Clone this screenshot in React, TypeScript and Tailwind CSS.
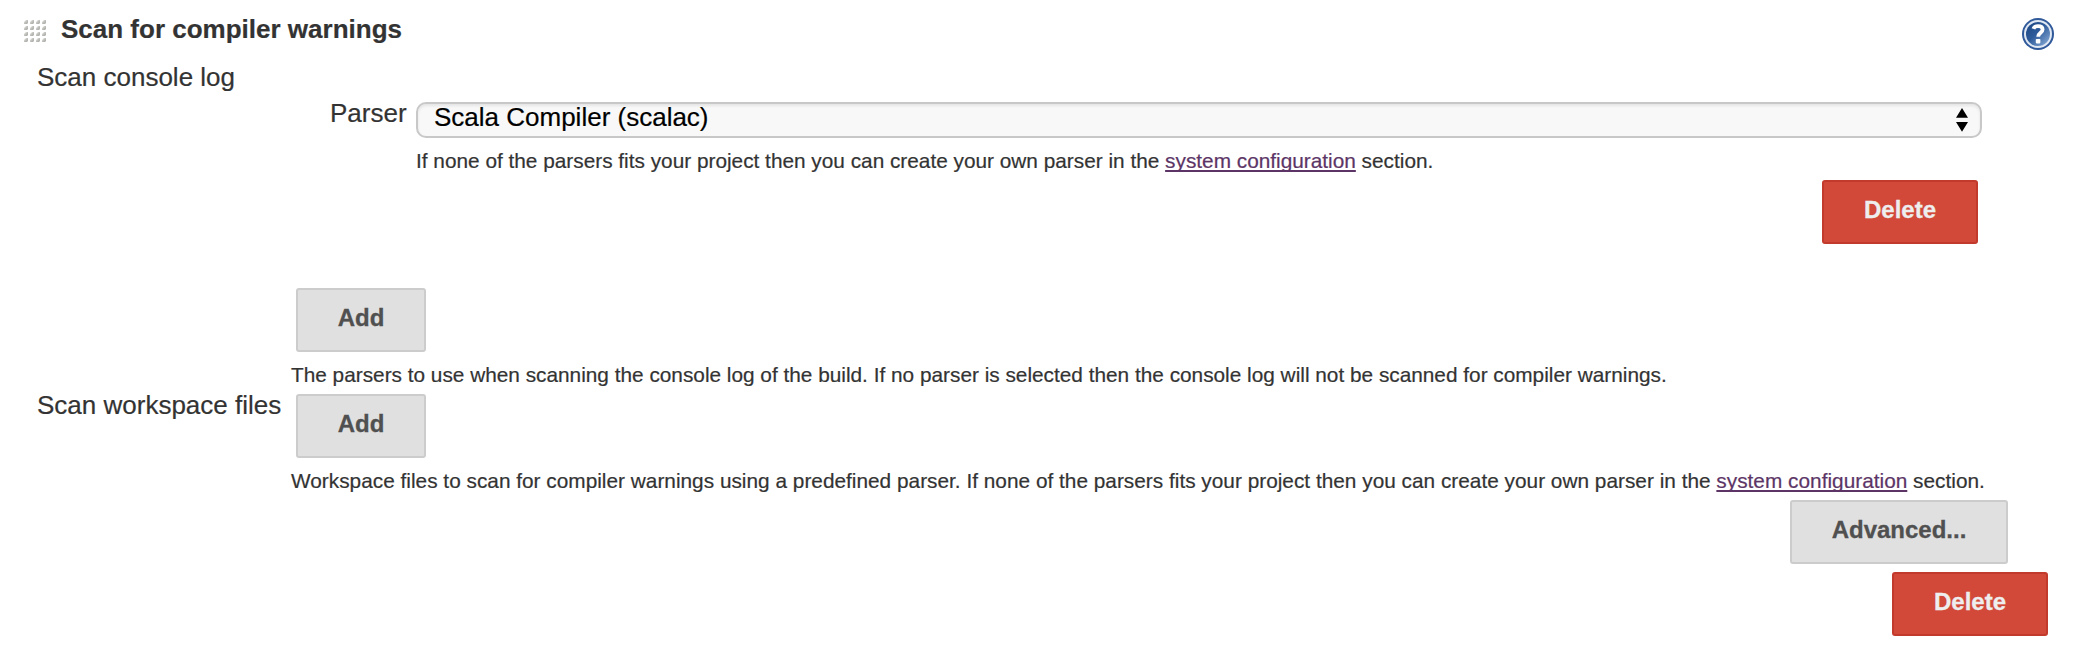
import type { ReactNode } from "react";

function Button({ children, width, danger = false }: { children: ReactNode; width: string; danger?: boolean }) {
  const tone = danger
    ? "bg-[#d24939] border-[#c23a2c] text-[#eeeeee]"
    : "bg-[#e0e0e0] border-[#cccccc] text-[#505050]";
  return (
    <button
      type="button"
      className={`flex h-16 shrink-0 items-start justify-center rounded-[3px] border-2 pt-[14px] text-2xl leading-[28px] font-bold whitespace-nowrap [-webkit-text-stroke:0.3px] ${width} ${tone}`}
    >
      {children}
    </button>
  );
}

function Description({ children, spacing = "" }: { children: ReactNode; spacing?: string }) {
  return <p className={`h-6 text-[20.8px] leading-6 whitespace-nowrap ${spacing}`}>{children}</p>;
}

function ConfigLink() {
  return (
    <a href="#" className="text-[#5c3566] underline decoration-2 underline-offset-[2px] [text-decoration-skip-ink:none]">
      system configuration
    </a>
  );
}

const gripSteps = [0, 6, 12, 18];

function DragGrip() {
  return (
    <svg width="22" height="23" viewBox="0 0 22 23" aria-hidden="true">
      <defs>
        <linearGradient id="grip" x1="0" y1="0" x2="1" y2="1">
          <stop offset="0.2" stopColor="#dcdcd8" />
          <stop offset="0.6" stopColor="#b8b8b4" />
          <stop offset="1" stopColor="#aaaaa6" />
        </linearGradient>
      </defs>
      {gripSteps.map((y) =>
        gripSteps.map((x) => (
          <path key={`${x}-${y}`} d={`M${x + 2} ${y}h2v3l-1 1h-3v-2z`} fill="url(#grip)" />
        )),
      )}
    </svg>
  );
}

function HelpIcon() {
  return (
    <svg width="32" height="32" viewBox="0 0 32 32" role="img" aria-label="Help">
      <defs>
        <linearGradient id="help" x1="0.1" y1="0.1" x2="0.9" y2="0.9">
          <stop offset="0" stopColor="#204a87" />
          <stop offset="0.45" stopColor="#2f5c9b" />
          <stop offset="1" stopColor="#7fa3d0" />
        </linearGradient>
      </defs>
      <circle cx="16" cy="16" r="16" fill="#30599a" />
      <circle cx="16" cy="16" r="14" fill="#dfe8f3" />
      <circle cx="16" cy="16" r="12" fill="url(#help)" />
      <path
        d="M11.4 10.800c.6-1.700 2.200-2.600 4.600-2.600 2.900 0 4.600 1.200 4.600 3.300 0 3.300-4.400 3.400-4.400 7.300"
        fill="none"
        stroke="#fff"
        strokeWidth="3.800"
      />
      <rect x="13.800" y="21" width="4.600" height="4.400" rx="0.800" fill="#fff" />
    </svg>
  );
}

export default function App() {
  return (
    <main
      className="flex h-[652px] w-[2078px] flex-col overflow-hidden bg-white text-[26px] leading-[30px] text-[#333333] [-webkit-text-stroke:0.2px]"
      style={{ fontFamily: '"Liberation Sans", Arial, sans-serif' }}
    >
      <header className="flex h-[62px] items-start pr-6 pl-6">
        <div className="mt-5">
          <DragGrip />
        </div>
        <h2 className="mt-[14px] ml-[15px] grow font-bold">Scan for compiler warnings</h2>
        <div className="mt-[18px]">
          <HelpIcon />
        </div>
      </header>

      <section>
        <h3 className="h-9 pl-[37px]">Scan console log</h3>
        <div className="flex pr-24 pl-[330px]">
          <label className="w-[86px] shrink-0">Parser</label>
          <div className="mt-1 flex h-9 grow items-start rounded-[10px] border-2 border-[#c8c8c8] bg-[#f8f8f8] pr-3 pl-4 text-black shadow-[inset_0_2px_3px_rgba(0,0,0,0.08)]">
            <span className="grow leading-[26px]">Scala Compiler (scalac)</span>
            <svg className="mt-[4px]" width="12" height="24" viewBox="0 0 12 24" aria-hidden="true">
              <path d="M6 0l6 9.800H0zM6 23.800l6-9.800H0z" fill="#000" />
            </svg>
          </div>
        </div>
        <div className="mt-[11px] pl-[416px]">
          <Description>
            If none of the parsers fits your project then you can create your own parser in the <ConfigLink /> section.
          </Description>
        </div>
        <div className="mt-[7px] flex justify-end pr-[100px]">
          <Button width="w-[156px]" danger>
            Delete
          </Button>
        </div>
        <div className="mt-11 flex pl-[296px]">
          <Button width="w-[130px]">Add</Button>
        </div>
        <div className="mt-[11px] pl-[291px]">
          <Description>
            The parsers to use when scanning the console log of the build. If no parser is selected then the console log
            will not be scanned for compiler warnings.
          </Description>
        </div>
      </section>

      <section className="mt-[3px]">
        <div className="flex pl-[37px]">
          <h3 className="w-[259px] shrink-0">Scan workspace files</h3>
          <div className="mt-1">
            <Button width="w-[130px]">Add</Button>
          </div>
        </div>
        <div className="mt-[11px] pl-[291px]">
          <Description spacing="tracking-[0.01px]">
            Workspace files to scan for compiler warnings using a predefined parser. If none of the parsers fits your
            project then you can create your own parser in the <ConfigLink /> section.
          </Description>
        </div>
      </section>

      <footer className="mt-[7px] flex flex-col items-end gap-2">
        <div className="pr-[70px]">
          <Button width="w-[218px]">Advanced...</Button>
        </div>
        <div className="pr-[30px]">
          <Button width="w-[156px]" danger>
            Delete
          </Button>
        </div>
      </footer>
    </main>
  );
}
